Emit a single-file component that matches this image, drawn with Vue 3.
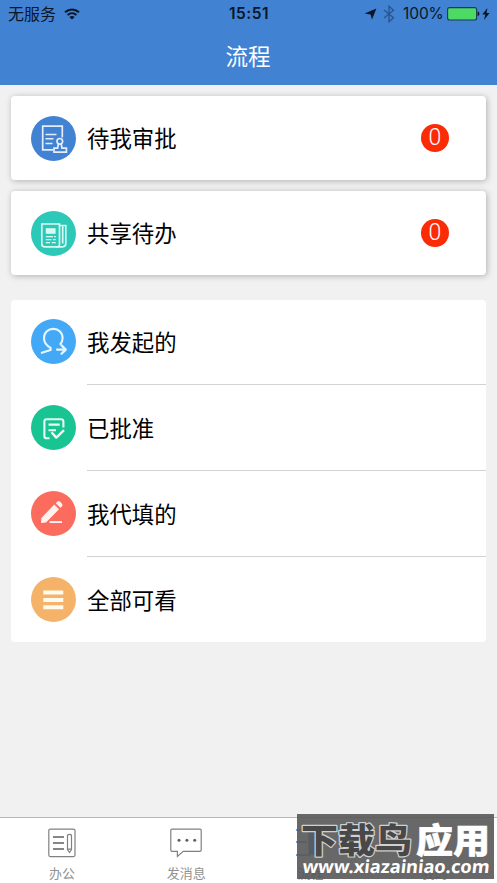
<template>
  <div class="page">
    <header class="header">
      <div class="status">
        <div class="status-left">
          <span class="carrier">无服务</span>
          <svg width="16" height="12" viewBox="0 0 16 12" fill="none" stroke="#0b1626" stroke-width="2">
            <path d="M1 4.2C5 .5 11 .5 15 4.2" />
            <path d="M3.6 7C6.2 4.7 9.8 4.7 12.4 7" />
            <path d="M8 11.6L5.3 8.9C6.8 7.6 9.2 7.6 10.7 8.9Z" fill="#0b1626" stroke="none" />
          </svg>
        </div>
        <span class="time">15:51</span>
        <div class="status-right">
          <svg class="location" width="13" height="12" viewBox="0 0 13 12">
            <path d="M12.4.4L8 11.6L6.6 6.4L.6 5.6Z" fill="#0b1626" />
          </svg>
          <svg class="bluetooth" width="12" height="18" viewBox="0 0 12 18" fill="none" stroke="#285590" stroke-width="1.3">
            <path d="M1 5L10.5 12.8L6 16.8V1.2L10.5 5.2L1 13" />
          </svg>
          <span class="percent">100%</span>
          <svg class="battery" width="33" height="14" viewBox="0 0 33 14">
            <rect x=".6" y=".6" width="29" height="12.4" rx="2" fill="#4cd964" stroke="#173d58" stroke-width="1.1" />
            <path d="M30.6 4.5C33 5 33 8.6 30.6 9.1Z" fill="#0b1626" />
          </svg>
          <svg class="bolt" width="8" height="12" viewBox="0 0 8 12">
            <path d="M5.4 0L.3 6.6H3.3L2 12L7.6 5H4.6Z" fill="#0b1626" />
          </svg>
        </div>
      </div>
      <h1 class="title">流程</h1>
    </header>

    <main class="content">
      <section v-for="item in cards" :key="item.name" class="card">
        <span class="icon" :class="item.icon">
          <svg v-if="item.icon === 'approve'" viewBox="0 0 45 45" fill="none" stroke="#e4eefa" stroke-width="1.7">
            <path d="M22 33.8H11.7V10.2H31.3V21.5" />
            <path d="M14.5 18.5H25.5M14.5 22.8H22.5M14.5 27.5H21.5" stroke-width="1.4" />
            <circle cx="28.8" cy="25.3" r="2.8" />
            <path d="M27.4 28L26.6 32.2H23V36.2H35.4V32.2H31L30.2 28" />
          </svg>
          <svg v-else viewBox="0 0 45 45" fill="none" stroke="#d7fbf3" stroke-width="1.7">
            <path d="M28.5 13V33.2C28.5 36 26.5 35.8 25 35.8H13.5Q10.8 35.8 10.8 33.1V13Z" />
            <path d="M28.5 14.5H34.8V32.6Q34.8 35.8 31.6 35.8H25M31.7 15V32.5" />
            <path d="M14.8 17.2H24.6V22.8H14.8Z" fill="#d7fbf3" stroke="none" />
            <path d="M14.8 25.6H22M14.8 28.6H20.5M14.8 31.6H19M23 25.6H24.8M22 28.6H24.8M20.6 31.6H24.8" stroke-width="1.3" />
          </svg>
        </span>
        <span class="label">{{ item.name }}</span>
        <span class="badge">{{ item.count }}</span>
      </section>

      <ul class="list">
        <li v-for="item in rows" :key="item.name" class="row">
          <span class="icon" :class="item.icon">
            <svg v-if="item.icon === 'started'" viewBox="0 0 45 45" fill="none" stroke="#e9f6ff" stroke-width="2.1" stroke-linecap="round" stroke-linejoin="round">
              <path d="M10.8 33.8L19.6 31V28.8C15.6 26.6 13 23.7 13 19.2C13 13.7 16.9 9.9 22.3 9.9S31.6 13.7 31.6 19.2C31.6 22 30.7 23.5 29.4 25" />
              <path d="M26 30.6H34.5M30.5 26.4L34.8 30.6L30.5 34.8" stroke-width="2.2" />
            </svg>
            <svg v-else-if="item.icon === 'passed'" viewBox="0 0 45 45" fill="none" stroke="#e6fbf3" stroke-width="2.1" stroke-linejoin="round">
              <path d="M18.5 33.3H15.5Q13.4 33.3 13.4 31.2V16.2Q13.4 14.2 15.5 14.2H30Q32.4 14.2 32.4 16.5V22.5" />
              <path d="M17.5 19.6H28.7M17.5 25.2H25" />
              <path d="M20.5 27.3L25.3 32.6L33 25.2" stroke-width="2.4" />
            </svg>
            <svg v-else-if="item.icon === 'filled'" viewBox="0 0 45 45" fill="#fff3ed">
              <path d="M10 32L10.4 27L23.2 13.6L28 18.2L15 31.6Z" />
              <path d="M24.8 12.2L26.4 10.6Q27.7 9.6 28.8 10.6L31 12.8Q32 14.1 31 15.2L29.5 16.8Z" />
              <rect x="18.6" y="30.1" width="12.4" height="1.9" />
            </svg>
            <svg v-else viewBox="0 0 45 45" fill="#fffaf0">
              <path d="M12.3 13.6H32.3V17.6H12.3ZM12.3 21H32.3V25H12.3ZM12.3 28.2H32.3V32.2H12.3Z" />
            </svg>
          </span>
          <span class="label">{{ item.name }}</span>
        </li>
      </ul>
    </main>

    <nav class="tabbar">
      <a v-for="tab in tabs" :key="tab.name" class="tab" :class="{ active: tab.active }">
        <svg v-if="tab.icon === 'office'" width="32" height="30" viewBox="0 0 32 30" fill="none" stroke="#808080" stroke-width="1.2">
          <rect x="2.8" y="1.1" width="26.2" height="27.5" rx="1.5" />
          <path d="M7 9H18M7 15H18M7 21H18" stroke="#606060" stroke-width="1.6" />
          <path d="M21.5 21.5V8Q21.5 6.3 23.5 6.3T25.5 8V21.5L23.5 24.5ZM21.5 21.2H25.5" />
        </svg>
        <svg v-else-if="tab.icon === 'message'" width="32" height="30" viewBox="0 0 32 30" fill="none" stroke="#808080" stroke-width="1.2">
          <path d="M2 1.1H30Q31.2 1.1 31.2 2.3V22Q31.2 23.3 30 23.3H13.2L7.4 28.4V23.3H2Q.8 23.3 .8 22V2.3Q.8 1.1 2 1.1Z" />
          <g fill="#606060" stroke="none">
            <circle cx="9" cy="12.3" r="1.5" />
            <circle cx="16.9" cy="12.3" r="1.5" />
            <circle cx="24.7" cy="12.3" r="1.5" />
          </g>
        </svg>
        <svg v-else-if="tab.icon === 'flow'" width="32" height="30" viewBox="0 0 32 30" fill="none" stroke="#4182d3" stroke-width="1.3">
          <path d="M1 2H16M1 14H12M1 27H16" />
          <path d="M14 2H25V26H14Z" fill="#4182d3" />
        </svg>
        <svg v-else width="32" height="30" viewBox="0 0 32 30" fill="none" stroke="#808080" stroke-width="1.2">
          <circle cx="16" cy="15" r="13" />
          <path d="M8 25Q8 18 16 18T24 25" />
          <circle cx="16" cy="12" r="5" />
        </svg>
        <span>{{ tab.name }}</span>
      </a>
    </nav>

    <div class="watermark">
      <svg width="197" height="65" viewBox="0 0 197 65">
        <text class="mark-name outlined" x="4" y="39" textLength="111" lengthAdjust="spacingAndGlyphs">下载鸟</text>
        <text class="mark-name solid" x="119" y="39" textLength="74" lengthAdjust="spacingAndGlyphs">应用</text>
        <text class="mark-url" transform="translate(5 59) skewX(-6)" textLength="187" lengthAdjust="spacingAndGlyphs">www.xiazainiao.com</text>
      </svg>
    </div>
  </div>
</template>

<script setup>
import { ref } from 'vue'

const cards = ref([
  { name: '待我审批', icon: 'approve', count: 0 },
  { name: '共享待办', icon: 'shared', count: 0 }
])

const rows = ref([
  { name: '我发起的', icon: 'started' },
  { name: '已批准', icon: 'passed' },
  { name: '我代填的', icon: 'filled' },
  { name: '全部可看', icon: 'all' }
])

const tabs = ref([
  { name: '办公', icon: 'office' },
  { name: '发消息', icon: 'message' },
  { name: '流程', icon: 'flow', active: true },
  { name: '我的', icon: 'mine' }
])
</script>

<style>
body {
  margin: 0;
  background-color: #f1f1f1;
}
</style>

<style scoped>
.page {
  position: relative;
  display: flex;
  flex-direction: column;
  height: 883px;
  overflow: hidden;
  background-color: #f1f1f1;
  font-family: "Liberation Sans", "Noto Sans CJK SC", sans-serif;
  color: #000;
}
svg {
  display: block;
  flex: none;
}
.header {
  height: 85px;
  flex: none;
  background-color: #4182d3;
}
.status {
  display: grid;
  grid-template-columns: 1fr auto 1fr;
  align-items: center;
  height: 28px;
  padding: 0 7px 0 8px;
  color: #0b1626;
  font-size: 16px;
  line-height: 28px;
}
.status-left,
.status-right {
  display: flex;
  align-items: center;
}
.status-left {
  gap: 8px;
}
.status-right {
  justify-content: flex-end;
}
.carrier {
  height: 28px;
  font-family: "Noto Sans CJK SC", sans-serif;
  font-size: 16px;
  line-height: 26px;
}
.time {
  font-family: Inter, sans-serif;
  font-weight: 600;
  font-size: 15.5px;
  letter-spacing: 0.5px;
}
.percent {
  width: 40px;
  margin: 0 4px 0 8px;
  font-family: Inter, sans-serif;
  font-size: 15.5px;
  letter-spacing: -0.1px;
}
.location {
  margin-right: 6px;
}
.bolt {
  margin-left: 2px;
}
.title {
  margin: 0;
  padding-top: 11px;
  color: #fff;
  font-family: "Noto Sans CJK SC", sans-serif;
  font-size: 22.5px;
  font-weight: 400;
  line-height: 33px;
  text-align: center;
  text-indent: -1px;
}
.content {
  flex: 1;
  padding: 11px 11px 0;
}
.card {
  display: flex;
  align-items: center;
  box-sizing: border-box;
  height: 84px;
  margin-bottom: 11px;
  padding: 0 37px 0 20px;
  border-radius: 4px;
  background-color: #fff;
  box-shadow: 1px 1px 6px rgba(0, 0, 0, 0.27);
}
.icon {
  flex: none;
  width: 45px;
  height: 45px;
  border-radius: 50%;
}
.approve {
  background-color: #4182d3;
}
.shared {
  background-color: #2cc8b8;
}
.started {
  background-color: #43a8f5;
}
.passed {
  background-color: #18c492;
}
.filled {
  background-color: #fb6c5e;
}
.all {
  background-color: #f5b369;
}
.label {
  margin-left: 11px;
  padding-bottom: 2px;
  font-family: "Noto Sans CJK SC", sans-serif;
  font-size: 22.4px;
  line-height: 34px;
}
.badge {
  width: 28px;
  height: 28px;
  margin-left: auto;
  border-radius: 50%;
  background-color: #fa2b05;
  color: #fff;
  font-family: Roboto, sans-serif;
  font-size: 23px;
  font-weight: 300;
  line-height: 28px;
  text-align: center;
}
.list {
  margin: 25px 0 0;
  padding: 0;
  border-radius: 4px;
  background-color: #fff;
  list-style: none;
}
.row {
  display: flex;
  align-items: center;
  box-sizing: border-box;
  height: 86px;
  padding: 0 0 3px 20px;
  background: linear-gradient(#d3d3d3, #d3d3d3) 76px 84px / 100% 1px no-repeat;
}
.row:last-child {
  height: 84px;
  padding-bottom: 1px;
  background: none;
}
.tabbar {
  display: flex;
  box-sizing: border-box;
  height: 66px;
  flex: none;
  border-top: 1px solid #b8b8b8;
  background-color: #fff;
}
.tab {
  display: flex;
  flex: 1;
  flex-direction: column;
  align-items: center;
  padding-top: 10px;
  color: #929292;
  font-family: "Noto Sans CJK SC", sans-serif;
  font-size: 13px;
  line-height: 20px;
}
.tab span {
  margin-top: 5px;
}
.tab.active {
  color: #4182d3;
}
.watermark {
  position: absolute;
  top: 814px;
  left: 297px;
  width: 197px;
  height: 65px;
  background-color: rgba(88, 88, 88, 0.9);
}
.mark-name {
  font-family: "Noto Sans CJK SC", sans-serif;
  font-size: 34px;
  font-weight: 900;
}
.outlined {
  fill: #484848;
  stroke: #d0d0d0;
  stroke-width: 2.4px;
  stroke-linejoin: round;
  paint-order: stroke;
}
.solid {
  fill: #fff;
  stroke: #fff;
  stroke-width: 0.6px;
}
.mark-url {
  fill: #fff;
  font-family: "Noto Sans", sans-serif;
  font-size: 18px;
  font-weight: 700;
}
</style>
